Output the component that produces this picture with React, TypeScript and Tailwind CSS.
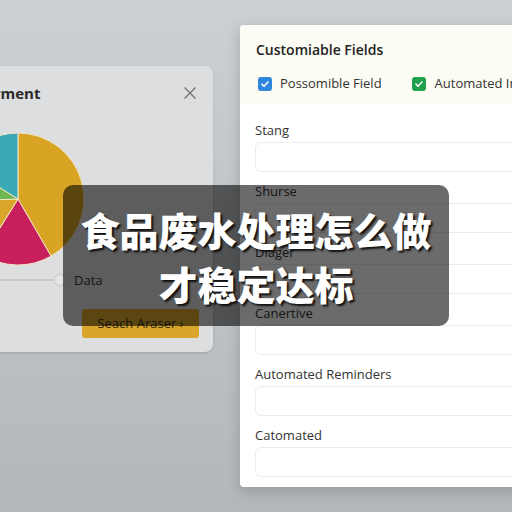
import React from 'react'

type Slice = { from: number; to: number; color: string }

const slices: Slice[] = [
    { from: -90, to: 60, color: '#d9a424' },
    { from: 60, to: 122, color: '#c71f5b' },
    { from: 122, to: 178, color: '#dba52a' },
    { from: 178, to: 212, color: '#6cb84e' },
    { from: 212, to: 270, color: '#3aa9b6' },
]

function arc(cx: number, cy: number, r: number, a0: number, a1: number) {
    const rad = (d: number) => (d * Math.PI) / 180
    const x0 = cx + r * Math.cos(rad(a0))
    const y0 = cy + r * Math.sin(rad(a0))
    const x1 = cx + r * Math.cos(rad(a1))
    const y1 = cy + r * Math.sin(rad(a1))
    const large = a1 - a0 > 180 ? 1 : 0
    return `M${cx},${cy} L${x0},${y0} A${r},${r} 0 ${large} 1 ${x1},${y1} Z`
}

function PieChart() {
    return (
        <svg width="140" height="140" viewBox="0 0 140 140" className="block">
            {slices.map((s, i) => (
                <path key={i} d={arc(70, 70, 66, s.from, s.to)} fill={s.color} stroke="#f3e6c4" strokeWidth="1" />
            ))}
        </svg>
    )
}

function Check({ color }: { color: string }) {
    return (
        <span className={`flex h-[14px] w-[14px] shrink-0 items-center justify-center rounded-[3px] ${color}`}>
            <svg width="10" height="10" viewBox="0 0 10 10" fill="none">
                <path d="M2 5.2l2 2L8 3" stroke="white" strokeWidth="1.6" strokeLinecap="round" strokeLinejoin="round" />
            </svg>
        </span>
    )
}

const fields = ['Stang', 'Shurse', 'Diager', 'Canertive', 'Automated Reminders', 'Catomated']

export default function App() {
    return (
        <div
            className="relative h-[512px] w-[512px] overflow-hidden bg-gradient-to-b from-[#cdd0d3] to-[#b3b6ba]"
            style={{ fontFamily: '"Open Sans", "Noto Sans", sans-serif' }}
        >
            <div className="flex items-start gap-[27px]">
                {/* management card, partly off the left edge */}
                <div className="-ml-[100px] mt-[66px] flex h-[286px] w-[313px] shrink-0 flex-col rounded-lg bg-[#dddedf] shadow-sm">
                    <div className="flex items-center justify-between pl-[16px] pr-[16px] pt-[16px]">
                        <span className="pl-[43px] text-[15px] font-bold text-[#2a2a2a]">Deferment</span>
                        <svg width="14" height="14" viewBox="0 0 14 14" className="text-[#707070]">
                            <path d="M1.5 1.5l11 11M12.5 1.5l-11 11" stroke="currentColor" strokeWidth="1.3" />
                        </svg>
                    </div>
                    <div className="ml-[48px] mt-[24px]">
                        <PieChart />
                    </div>
                    <div className="mt-[2px] flex items-center">
                        <div className="ml-[40px] h-[2px] w-[114px] bg-[#c9c9c9]" />
                        <div className="h-[12px] w-[12px] rounded-full border border-[#c4c4c4] bg-[#e6e6e6]" />
                        <span className="ml-[8px] text-[13px] text-[#333]">Data</span>
                    </div>
                    <div className="ml-[182px] mt-[19px] flex h-[29px] w-[117px] items-center justify-center rounded-[3px] bg-[#d8a62b] text-[13px] text-[#3a2e10]">
                        Seach Araser ›
                    </div>
                </div>

                {/* customisable fields panel */}
                <div className="mt-[25px] h-[462px] w-[300px] shrink-0 overflow-hidden rounded-[4px] bg-white shadow-[0_4px_14px_rgba(0,0,0,0.18)]">
                    <div className="h-[80px] bg-[#fcfcf4] px-[16px] pt-[14px]">
                        <div className="text-[14px] font-semibold text-[#222]">Customiable Fields</div>
                        <div className="mt-[14px] flex items-center whitespace-nowrap text-[13px] text-[#333]">
                            <span className="ml-[2px]"><Check color="bg-[#2f86de]" /></span>
                            <span className="ml-[8px]">Possomible Field</span>
                            <span className="ml-[30px]"><Check color="bg-[#22a14c]" /></span>
                            <span className="ml-[9px]">Automated Info</span>
                        </div>
                    </div>
                    <div className="flex flex-col gap-[11px] pl-[15px] pt-[17px]">
                        {fields.map(f => (
                            <div key={f} className="flex flex-col gap-[4px]">
                                <span className="text-[13px] leading-[16px] text-[#333]">{f}</span>
                                <div className="h-[30px] w-[300px] rounded-[6px] border border-[#ebebeb]" />
                            </div>
                        ))}
                    </div>
                </div>
            </div>

            {/* caption overlay */}
            <div className="absolute left-[63px] top-[185px] flex h-[141px] w-[386px] flex-col items-center justify-center rounded-[10px] bg-black/[0.58]">
                <div
                    className="text-center text-[39px] font-black leading-[54px] text-white [text-shadow:2px_2px_2px_rgba(0,0,0,0.85)]"
                    style={{ fontFamily: '"Noto Sans CJK SC", sans-serif' }}
                >
                    <div>食品废水处理怎么做</div>
                    <div>才稳定达标</div>
                </div>
            </div>
        </div>
    )
}
